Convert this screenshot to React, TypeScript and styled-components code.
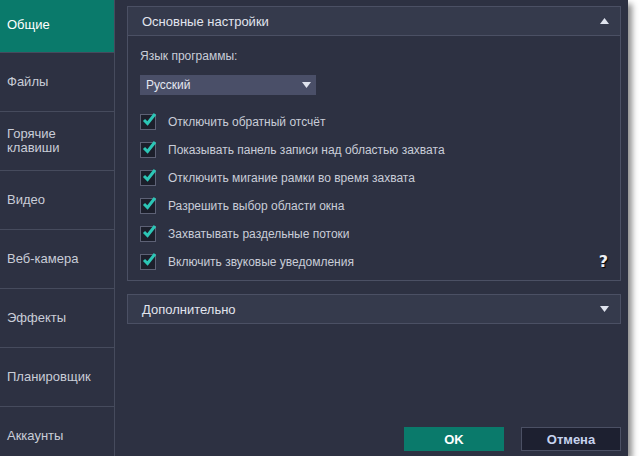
import React from "react";
import styled, { createGlobalStyle } from "styled-components";

const Global = createGlobalStyle`
  html, body { margin: 0; padding: 0; background: #ffffff; }
  body { font-family: "Liberation Sans", Arial, sans-serif; }
`;

const Window = styled.div`
  width: 628px;
  height: 456px;
  display: flex;
  background: #2d3142;
  box-shadow: 4px 4px 6px rgba(0, 0, 0, 0.45);
  overflow: hidden;
`;

const Sidebar = styled.nav`
  width: 114px;
  flex: none;
  border-right: 1px solid #464b5d;
  overflow: hidden;
`;

const NavList = styled.div`
  margin-top: -6px;
  display: flex;
  flex-direction: column;
`;

const NavItem = styled.div<{ $active?: boolean }>`
  height: 59px;
  flex: none;
  display: flex;
  align-items: center;
  padding: 0 0 0 7px;
  box-sizing: border-box;
  border-bottom: 1px solid #464b5d;
  background: ${(p) => (p.$active ? "#0a7a6b" : "transparent")};
  color: ${(p) => (p.$active ? "#ffffff" : "#c9cdd8")};
  font-size: 13px;
  line-height: 14px;
  padding-top: ${(p) => (p.$active ? "4px" : "0")};
`;

const Main = styled.main`
  flex: 1;
  display: flex;
  flex-direction: column;
  padding: 6px 7px 5px 12px;
  min-width: 0;
`;

const Panel = styled.section`
  border: 1px solid #4b5064;
  display: flex;
  flex-direction: column;
`;

const PanelHeader = styled.div`
  height: 28px;
  background: #353a4c;
  display: flex;
  align-items: center;
  justify-content: space-between;
  padding: 0 11px 0 14px;
  color: #e2e5ee;
  font-size: 13px;
`;

const PanelBody = styled.div`
  border-top: 1px solid #4b5064;
  padding: 10px 12px 4px 12px;
  display: flex;
  flex-direction: column;
  position: relative;
`;

const Label = styled.div`
  color: #c9cdd8;
  font-size: 12px;
  height: 20px;
  line-height: 20px;
`;

const Select = styled.div`
  margin-top: 9px;
  width: 176px;
  height: 20px;
  background: #4a4f68;
  display: flex;
  align-items: center;
  justify-content: space-between;
  padding: 0 5px 0 6px;
  box-sizing: border-box;
  color: #e4e7f0;
  font-size: 12px;
  margin-bottom: 13px;
`;

const CheckRow = styled.label`
  height: 28px;
  display: flex;
  align-items: center;
  gap: 12px;
  color: #c9cdd8;
  font-size: 12px;
`;

const Box = styled.span`
  width: 14px;
  height: 14px;
  border: 1px solid #5d6175;
  background: #1c1f2b;
  position: relative;
  flex: none;
`;

const Check = styled.svg`
  position: absolute;
  left: 1px;
  top: -3px;
`;

const Help = styled.div`
  position: absolute;
  right: 12px;
  bottom: 9px;
  color: #eef0f5;
  font-weight: bold;
  font-size: 16px;
  font-family: "DejaVu Sans", sans-serif;
  text-shadow: 1px 1px 1px #000;
`;

const SecondPanel = styled(Panel)`
  margin-top: 13px;
`;

const Spacer = styled.div`
  flex: 1;
`;

const Footer = styled.div`
  display: flex;
  justify-content: flex-end;
  gap: 17px;
`;

const Button = styled.button<{ $primary?: boolean }>`
  width: 100px;
  height: 24px;
  box-sizing: border-box;
  font-family: "Liberation Sans", Arial, sans-serif;
  font-weight: bold;
  font-size: 13px;
  border: 1px solid ${(p) => (p.$primary ? "#0a7a6b" : "#4b5064")};
  background: ${(p) => (p.$primary ? "#0a7a6b" : "#1d2030")};
  color: ${(p) => (p.$primary ? "#ffffff" : "#c7d3ee")};
  padding: 0;
`;

const Arrow = ({ up }: { up?: boolean }) => (
  <svg width="9" height="6" viewBox="0 0 9 6">
    <path d={up ? "M0 6 L4.5 0 L9 6 Z" : "M0 0 L9 0 L4.5 6 Z"} fill="#dfe3ee" />
  </svg>
);

const items = [
  "Отключить обратный отсчёт",
  "Показывать панель записи над областью захвата",
  "Отключить мигание рамки во время захвата",
  "Разрешить выбор области окна",
  "Захватывать раздельные потоки",
  "Включить звуковые уведомления",
];

const nav = ["Общие", "Файлы", "Горячие клавиши", "Видео", "Веб-камера", "Эффекты", "Планировщик", "Аккаунты"];

export default function App() {
  return (
    <>
      <Global />
      <Window>
        <Sidebar>
          <NavList>
            {nav.map((n, i) => (
              <NavItem key={n} $active={i === 0}>
                {n === "Горячие клавиши" ? (
                  <span>
                    Горячие
                    <br />
                    клавиши
                  </span>
                ) : (
                  n
                )}
              </NavItem>
            ))}
          </NavList>
        </Sidebar>
        <Main>
          <Panel>
            <PanelHeader>
              <span>Основные настройки</span>
              <Arrow up />
            </PanelHeader>
            <PanelBody>
              <Label>Язык программы:</Label>
              <Select>
                <span>Русский</span>
                <Arrow />
              </Select>
              {items.map((t) => (
                <CheckRow key={t}>
                  <Box>
                    <Check width="15" height="15" viewBox="0 0 15 15">
                      <path d="M2 8 L5.5 11.5 L13 2" stroke="#2cc6b6" strokeWidth="3" fill="none" />
                    </Check>
                  </Box>
                  {t}
                </CheckRow>
              ))}
              <Help>?</Help>
            </PanelBody>
          </Panel>
          <SecondPanel>
            <PanelHeader>
              <span>Дополнительно</span>
              <Arrow />
            </PanelHeader>
          </SecondPanel>
          <Spacer />
          <Footer>
            <Button $primary>OK</Button>
            <Button>Отмена</Button>
          </Footer>
        </Main>
      </Window>
    </>
  );
}
